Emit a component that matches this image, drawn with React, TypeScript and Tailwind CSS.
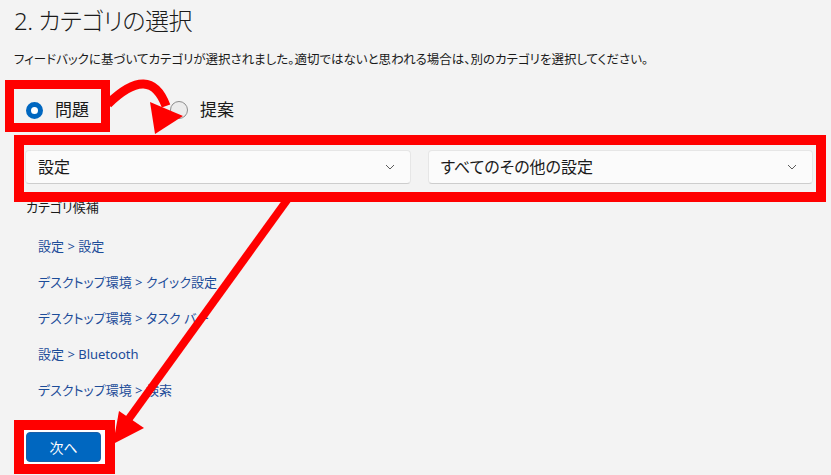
import React from "react"

const links = [
  "設定 > 設定",
  "デスクトップ環境 > クイック設定",
  "デスクトップ環境 > タスク バー",
  "設定 > Bluetooth",
  "デスクトップ環境 > 検索",
]

function Chevron() {
  return (
    <svg width="10" height="6" viewBox="0 0 10 6" className="shrink-0">
      <path d="M1 1 L5 5 L9 1" fill="none" stroke="#5c5c5c" strokeWidth="1" />
    </svg>
  )
}

function Dropdown({ label }: { label: string }) {
  return (
    <div className="flex-1 h-[34px] flex items-center justify-between pl-[12px] pr-[15px] bg-[#fbfbfb] border border-[#e6e6e6] border-b-[#cdcdcd] rounded-[4px] text-[16px] text-[#1a1a1a]">
      <span>{label}</span>
      <Chevron />
    </div>
  )
}

export default function App() {
  return (
    <div
      className="relative w-[831px] h-[475px] overflow-hidden bg-[#f3f3f3] text-[#1a1a1a] [font-feature-settings:'palt']"
      style={{ fontFamily: "'Noto Sans', 'Noto Sans CJK JP', sans-serif" }}
    >
      <h1 className="pl-[14px] pt-[3px] text-[24px] leading-[36px] font-light tracking-[-0.5px]">2. カテゴリの選択</h1>
      <p className="mt-[13px] pl-[14px] text-[12.5px] leading-[16px]">
        フィードバックに基づいてカテゴリが選択されました。適切ではないと思われる場合は、別のカテゴリを選択してください。
      </p>

      <div className="mt-[12px] flex">
        <div className="ml-[5px] w-[105px] h-[52px] border-[9px] border-[#ff0000] pt-[8px] pl-[12px] flex items-center gap-[12px]">
          <span className="w-[17px] h-[17px] rounded-full border-[5px] border-[#0067c0] bg-white shrink-0" />
          <span className="text-[17px] leading-[20px]">問題</span>
        </div>
        <div className="ml-[60px] h-[52px] pt-[8px] flex items-center gap-[12px]">
          <span className="w-[18px] h-[18px] rounded-full border border-[#8d8d8d] bg-[#ececec] shrink-0" />
          <span className="text-[17px] leading-[20px]">提案</span>
        </div>
      </div>

      <div className="relative z-10 mt-[3px] ml-[14px] w-[812px] h-[67px] border-[10px] border-[#ff0000] pl-[1px] pr-[3px] pt-[5px] flex gap-[17px] items-start">
        <Dropdown label="設定" />
        <Dropdown label="すべてのその他の設定" />
      </div>

      <div className="-mt-[3px] pl-[26px] text-[13px] leading-[16px]">カテゴリ候補</div>

      <div className="mt-[23px] pl-[38px] flex flex-col gap-[20px] text-[13px] leading-[16px] text-[#1c4c99]">
        {links.map((l) => (
          <span key={l}>{l}</span>
        ))}
      </div>

      <div className="mt-[22px] ml-[14px] w-[101px] h-[54px] border-[10px] border-[#ff0000] bg-white pl-[2px] pt-[2px]">
        <button className="w-[75px] h-[30px] rounded-[4px] bg-[#0067c0] border border-[#1a5fa8] text-white text-[14px] flex items-center justify-center">
          次へ
        </button>
      </div>

      <svg className="absolute inset-0 z-20 pointer-events-none" width="831" height="475" viewBox="0 0 831 475">
        <path d="M108 104 Q150 63 166 106" fill="none" stroke="#ff0000" strokeWidth="9" />
        <polygon points="150,102 183,116 155,134" fill="#ff0000" />
        <line x1="290" y1="196" x2="128" y2="420" stroke="#ff0000" strokeWidth="8" />
        <polygon points="119,411 144,428 113,444" fill="#ff0000" />
      </svg>
    </div>
  )
}
